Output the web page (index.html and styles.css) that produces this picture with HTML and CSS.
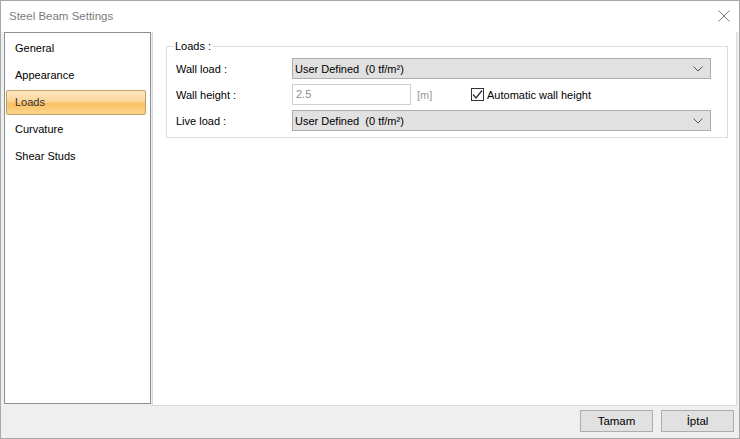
FILE: index.html
```html
<!DOCTYPE html>
<html>
<head>
<meta charset="utf-8">
<link rel="stylesheet" href="styles.css">
</head>
<body>
<div class="window">
  <div class="titlebar">
    <span class="title">Steel Beam Settings</span>
    <svg class="close" width="12" height="12" viewBox="0 0 12 12"><path d="M0.5 0.5 L11.5 11.5 M11.5 0.5 L0.5 11.5" stroke="#777" stroke-width="1" fill="none"/></svg>
  </div>
  <div class="main">
    <div class="nav">
      <div class="nav-item">General</div>
      <div class="nav-item">Appearance</div>
      <div class="nav-item active">Loads</div>
      <div class="nav-item">Curvature</div>
      <div class="nav-item">Shear Studs</div>
    </div>
    <div class="content">
      <fieldset class="group">
        <legend>Loads :</legend>
        <div class="row">
          <span class="label">Wall load :</span>
          <div class="combo"><span>User Defined&nbsp; (0 tf/m²)</span>
            <svg width="10" height="6" viewBox="0 0 10 6"><path d="M0.5 0.5 L5 5 L9.5 0.5" stroke="#555" fill="none"/></svg>
          </div>
        </div>
        <div class="row">
          <span class="label">Wall height :</span>
          <div class="textbox">2.5</div>
          <span class="unit">[m]</span>
          <label class="check">
            <span class="box"><svg width="11" height="11" viewBox="0 0 11 11"><path d="M1 5.5 L4 9 L10 1.5" stroke="#333" stroke-width="1.3" fill="none"/></svg></span>
            Automatic wall height
          </label>
        </div>
        <div class="row">
          <span class="label">Live load :</span>
          <div class="combo"><span>User Defined&nbsp; (0 tf/m²)</span>
            <svg width="10" height="6" viewBox="0 0 10 6"><path d="M0.5 0.5 L5 5 L9.5 0.5" stroke="#555" fill="none"/></svg>
          </div>
        </div>
      </fieldset>
    </div>
  </div>
  <div class="footer">
    <button class="btn">Tamam</button>
    <button class="btn">İptal</button>
  </div>
</div>
</body>
</html>
```
FILE: styles.css
```css
* { box-sizing: border-box; }
html, body { margin: 0; padding: 0; }
body {
  font-family: "Liberation Sans", Arial, sans-serif;
  font-size: 11px;
  color: #000;
  background: #fff;
}
.window {
  width: 740px;
  height: 439px;
  border: 1px solid #a8a8a8;
  display: flex;
  flex-direction: column;
  background: #efefef;
}
.titlebar {
  height: 31px;
  background: #fff;
  display: flex;
  align-items: center;
  justify-content: space-between;
  padding: 0 9px 2px 8px;
}
.title {
  color: #7c7c7c;
  font-size: 11.5px;
}
.main {
  flex: 1;
  display: flex;
  padding-left: 3px;
  gap: 1px;
  min-height: 0;
}
.nav {
  width: 147px;
  height: 372px;
  background: #fff;
  border: 1px solid #8a8f95;
  padding: 2px 1px;
  display: flex;
  flex-direction: column;
}
.nav-item {
  height: 27px;
  line-height: 27px;
  padding-left: 8px;
  margin: 0 3px 0 1px;
}
.nav-item.active {
  border: 1px solid #c0a069;
  border-radius: 2px;
  line-height: 23px;
  height: 25px;
  margin: 1px 3px 1px 0;
  padding-left: 8px;
  background: linear-gradient(#fde8c4 0%, #fbd597 45%, #f9c062 55%, #fbd78f 100%);
  color: #333;
}
.content {
  flex: 1;
  background: #fff;
  border: 1px solid #d9d9d9;
  border-top: none;
  margin-right: 2px;
  height: 374px;
  padding: 8px 8px 0 13px;
}
.group {
  margin: 0;
  border: 1px solid #dcdcdc;
  padding: 6px 16px 6px 9px;
}
.group legend {
  padding: 0 1px;
  margin-left: -2px;
  font-size: 11px;
}
.row {
  display: flex;
  align-items: center;
  height: 21px;
  margin-bottom: 5px;
}
.row:last-child { margin-bottom: 0; }
.label {
  width: 116px;
  flex: none;
}
.combo {
  flex: 1;
  height: 21px;
  background: #e1e1e1;
  border: 1px solid #adadad;
  display: flex;
  align-items: center;
  justify-content: space-between;
  padding: 0 7px 0 2px;
}
.textbox {
  width: 119px;
  height: 21px;
  border: 1px solid #d0d0d0;
  color: #8c8c8c;
  padding: 0 3px;
  line-height: 19px;
}
.unit {
  color: #9a9a9a;
  margin-left: 6px;
  width: 54px;
}
.check {
  display: flex;
  align-items: center;
  gap: 3px;
}
.box {
  width: 13px;
  height: 13px;
  border: 1px solid #333;
  display: flex;
  align-items: center;
  justify-content: center;
}
.footer {
  height: 32px;
  display: flex;
  justify-content: flex-end;
  align-items: flex-start;
  padding: 4px 5px 0 0;
  gap: 8px;
}
.btn {
  width: 73px;
  height: 22px;
  background: #e1e1e1;
  border: 1px solid #adadad;
  font-family: "Liberation Sans", Arial, sans-serif;
  font-size: 11.5px;
  color: #000;
  padding: 0;
}
```
